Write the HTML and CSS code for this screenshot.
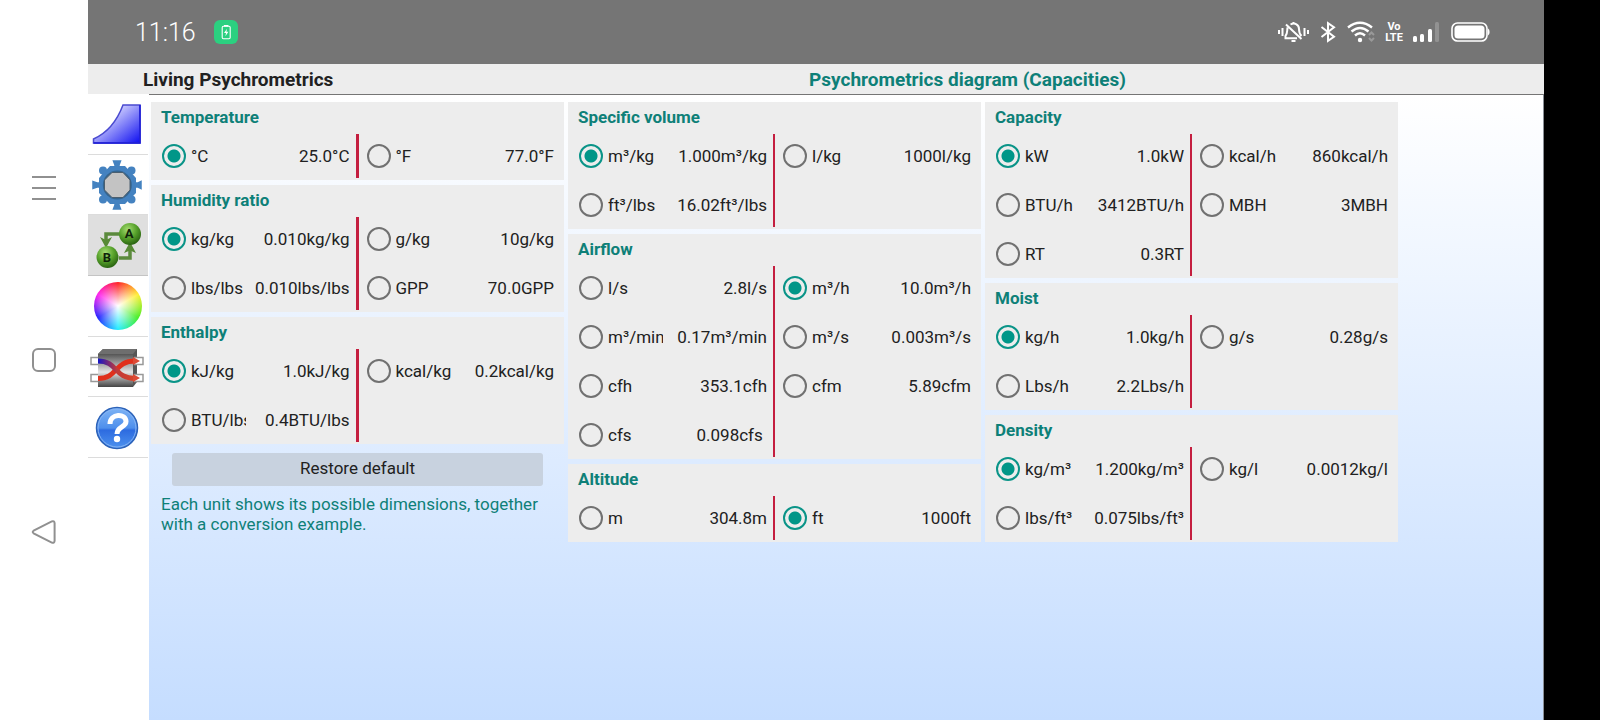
FILE: index.html
```html
<!DOCTYPE html>
<html lang="en">
<head>
<meta charset="UTF-8">
<meta name="viewport" content="width=device-width, initial-scale=1.0">
<title>Living Psychrometrics</title>
<link rel="stylesheet" href="styles.css">
</head>
<body>
<div class="screen">
    <nav class="system-nav">
        <button class="system-button" aria-label="Recent apps">
            <svg width="26" height="26" viewBox="0 0 26 26"><path d="M1 2h24M1 13h24M1 24h24"/></svg>
        </button>
        <button class="system-button" aria-label="Home">
            <svg width="26" height="26" viewBox="0 0 26 26"><rect x="2" y="2" width="22" height="22" rx="5"/></svg>
        </button>
        <button class="system-button" aria-label="Back">
            <svg width="26" height="26" viewBox="0 0 26 26"><path d="M2.6 11.7 20.8 2.4Q23.3 1.6 23.6 4V22Q23.3 24.4 20.8 23.6L2.6 14.3Q.8 13 2.6 11.7Z"/></svg>
        </button>
    </nav>

    <div class="app">
        <div class="status-bar">
            <span class="clock">11:16</span>
            <svg class="charge" width="24" height="24" viewBox="0 0 24 24">
                <rect width="24" height="24" rx="6" fill="#2bd080"/>
                <rect x="8.2" y="6.2" width="8" height="12.6" rx="1.2" fill="none" stroke="#fff" stroke-width="1.1"/>
                <path d="M10 5h4.400v1.500H10zM13 8.800l-3 4.200h2l-.6 3.200 3-4.400h-2z" fill="#fff"/>
            </svg>
            <div class="status-icons">
                <svg width="31" height="22" viewBox="0 0 31 22" fill="none" stroke="#fff" stroke-width="2">
                    <path d="M1 9v4M4.500 7v8M26.500 7v8M30 9v4"/>
                    <path d="M8 3.500 23.500 18M9.500 6.500C9 10 9.600 12.500 7.500 15V17.200H19M12.500 3.500C17 1 21 4 21 8c0 3 .5 5 2.500 7M15.500 1v2M13.500 20h4"/>
                </svg>
                <svg width="16" height="22" viewBox="0 0 16 22" fill="none" stroke="#fff" stroke-width="2">
                    <path d="M1.500 6 14 15.800 8 19.800V2.200L14 6.200 1.500 16"/>
                </svg>
                <svg width="28" height="22" viewBox="0 0 28 22" fill="none" stroke="#fff" stroke-width="2.400">
                    <path d="M1 6.500Q13 -3 25 6.500M4.500 10.500Q13 3.500 21.500 10.500M8 14.500Q13 10 18 14.500"/>
                    <circle cx="13" cy="19" r="2.200" fill="#fff" stroke="none"/>
                    <path d="M22 14l2.500-2.500L27 14M22 17l2.500 2.500L27 17" stroke="#999" stroke-width="2"/>
                </svg>
                <span class="volte">Vo<br>LTE</span>
                <svg width="27" height="22" viewBox="0 0 27 22">
                    <rect x="0" y="15" width="4" height="6" rx="1.500" fill="#fff"/>
                    <rect x="7" y="13" width="4" height="8" rx="1.500" fill="#fff"/>
                    <rect x="15" y="8" width="4" height="13" rx="1.500" fill="#fff"/>
                    <rect x="22" y="1" width="4" height="20" rx="1.500" fill="#929292"/>
                </svg>
                <svg width="40" height="22" viewBox="0 0 40 22">
                    <rect x="1" y="2" width="35" height="18" rx="5.500" fill="none" stroke="#fff" stroke-width="1.600"/>
                    <rect x="3.500" y="4.500" width="30" height="13" rx="3.500" fill="#fff"/>
                    <path d="M37 7.500q1.600.5 1.600 3.500t-1.600 3.500z" fill="#fff"/>
                </svg>
            </div>
        </div>

        <header class="title-bar">
            <h1 class="app-name">Living Psychrometrics</h1>
            <h2 class="page-name">Psychrometrics diagram (Capacities)</h2>
        </header>

        <div class="body">
            <nav class="sidebar">
                <button class="tool" aria-label="Diagram">
                    <svg width="56" height="56" viewBox="0 0 56 56">
                        <defs><linearGradient id="chart" x1="0" y1="0" x2="1" y2="1"><stop offset=".25" stop-color="#dcdcff"/><stop offset="1" stop-color="#0d0df0"/></linearGradient></defs>
                        <path d="M3.500 47V43C17 37 27 25 33 9H50V47Z" fill="url(#chart)" stroke="#4a4ad0" stroke-width="1.500"/>
                        <path d="M50 9V47H3.500" fill="none" stroke="#1818d8" stroke-width="1.500"/>
                    </svg>
                </button>
                <button class="tool" aria-label="Settings">
                    <svg width="56" height="56" viewBox="0 0 56 56">
                        <g fill="#4482c0">
                            <path d="M25 11V8L23.500 4h7L29 8V11zM25 45V48L23.500 52h7L29 48V45zM10 26H7L3 24.500v7L7 30H10zM45 26H48L51 24.500v7L48 30H45z" stroke="#4482c0" stroke-width="1.500"/>
                            <path d="M20 9h15l11 12v15L35 47H20L9 36V21z"/>
                            <circle cx="13" cy="13.500" r="4"/>
                            <circle cx="41.500" cy="13.500" r="4"/>
                            <circle cx="13" cy="42.500" r="4"/>
                            <circle cx="41.500" cy="42.500" r="4"/>
                            <circle cx="27.300" cy="28" r="18.500"/>
                        </g>
                        <circle cx="27.300" cy="28" r="14.500" fill="#34658f"/>
                        <path d="M22 15.500h11l7 7.500v10L33 40.500H22L14.500 33V23z" fill="#c3c3c3" stroke="#4b5f70"/>
                    </svg>
                </button>
                <button class="tool active" aria-label="Units" aria-current="page">
                    <svg width="56" height="56" viewBox="0 0 56 56">
                        <defs><radialGradient id="ball" cx=".4" cy=".3" r=".7"><stop offset="0" stop-color="#a6dc72"/><stop offset=".55" stop-color="#58a32c"/><stop offset="1" stop-color="#2b6512"/></radialGradient></defs>
                        <g fill="none" stroke="#5b8a3c" stroke-width="3.500">
                            <path d="M31 17H16V23M29 41H40V33"/>
                        </g>
                        <path d="M10 20l6 3 6-3-6 11zM34 36l6-2.500 6 2.500-6-11z" fill="#578a36"/>
                        <circle cx="40" cy="17" r="11" fill="url(#ball)"/>
                        <circle cx="17.500" cy="40" r="11" fill="url(#ball)"/>
                        <text x="39" y="21">A</text>
                        <text x="17" y="45">B</text>
                    </svg>
                </button>
                <button class="tool" aria-label="Colors"><span class="color-wheel"></span></button>
                <button class="tool" aria-label="Processes">
                    <svg width="56" height="56" viewBox="0 0 56 56">
                        <defs>
                            <linearGradient id="steel" x1="0" y1="0" x2="0" y2="1"><stop offset="0" stop-color="#555"/><stop offset=".55" stop-color="#e4e4e4"/><stop offset="1" stop-color="#444"/></linearGradient>
                            <linearGradient id="flow" x1="0" y1="0" x2="1" y2="0"><stop offset="0" stop-color="#1414c8"/><stop offset=".5" stop-color="#c03a3a"/><stop offset="1" stop-color="#d84428"/></linearGradient>
                        </defs>
                        <path d="M8 15 13 10H47V43L43 48z" fill="#555"/>
                        <rect x="8" y="15" width="35" height="33" fill="url(#steel)"/>
                        <path d="M8 15 13 10H47L43 15z" fill="#6e6e6e"/>
                        <path d="M8 18.500H1V25.500H8M8 35.500H1V42.500H8M44 18.500H53V25.500H44M44 35.500H53V42.500H44" fill="#fff" stroke="#999" stroke-width="1.500"/>
                        <path d="M8 39.500C28 39.500 24 22 45 22" fill="none" stroke="#e0301c" stroke-width="5"/>
                        <path d="M8 22C28 22 24 39.500 45 39.500" fill="none" stroke="url(#flow)" stroke-width="5"/>
                        <path d="M43 18l7 4-7 4zM43 35l7 4-7 4z" fill="#dc4a35"/>
                    </svg>
                </button>
                <button class="tool" aria-label="Help">
                    <svg width="56" height="56" viewBox="0 0 56 56">
                        <defs><linearGradient id="help" x1="0" y1="0" x2="0" y2="1"><stop offset="0" stop-color="#7fb4f5"/><stop offset=".5" stop-color="#4e8fec"/><stop offset=".55" stop-color="#2d6be0"/><stop offset="1" stop-color="#4d92ee"/></linearGradient></defs>
                        <circle cx="27" cy="29" r="20.500" fill="url(#help)" stroke="#2c62b8" stroke-width="1.500"/>
                        <circle cx="27" cy="29" r="19" fill="none" stroke="#86b4f4"/>
                        <path d="M20 25C20 14 36 14 36 22.500 36 28.500 27 27.500 27 35" fill="none" stroke="#fff" stroke-width="5"/>
                        <circle cx="27" cy="40" r="3.200" fill="#fff"/>
                    </svg>
                </button>
            </nav>

            <main class="content">
                <form class="columns">
                    <div class="column wide-line">
                        <fieldset class="unit">
                            <legend>Temperature</legend>
                            <div class="options">
                                <div class="half">
                                    <label><input type="radio" name="temperature" checked><span class="name">°C</span><span class="value">25.0°C</span></label>
                                </div>
                                <div class="half">
                                    <label><input type="radio" name="temperature"><span class="name">°F</span><span class="value">77.0°F</span></label>
                                </div>
                            </div>
                        </fieldset>
                        <fieldset class="unit">
                            <legend>Humidity ratio</legend>
                            <div class="options">
                                <div class="half">
                                    <label><input type="radio" name="humidity" checked><span class="name">kg/kg</span><span class="value">0.010kg/kg</span></label>
                                    <label><input type="radio" name="humidity"><span class="name">lbs/lbs</span><span class="value">0.010lbs/lbs</span></label>
                                </div>
                                <div class="half">
                                    <label><input type="radio" name="humidity"><span class="name">g/kg</span><span class="value">10g/kg</span></label>
                                    <label><input type="radio" name="humidity"><span class="name">GPP</span><span class="value">70.0GPP</span></label>
                                </div>
                            </div>
                        </fieldset>
                        <fieldset class="unit">
                            <legend>Enthalpy</legend>
                            <div class="options">
                                <div class="half">
                                    <label><input type="radio" name="enthalpy" checked><span class="name">kJ/kg</span><span class="value">1.0kJ/kg</span></label>
                                    <label><input type="radio" name="enthalpy"><span class="name">BTU/lbs</span><span class="value">0.4BTU/lbs</span></label>
                                </div>
                                <div class="half">
                                    <label><input type="radio" name="enthalpy"><span class="name">kcal/kg</span><span class="value">0.2kcal/kg</span></label>
                                </div>
                            </div>
                        </fieldset>
                        <button class="restore" type="reset">Restore default</button>
                        <p class="hint">Each unit shows its possible dimensions, together with a conversion example.</p>
                    </div>

                    <div class="column">
                        <fieldset class="unit">
                            <legend>Specific volume</legend>
                            <div class="options">
                                <div class="half">
                                    <label><input type="radio" name="volume" checked><span class="name">m³/kg</span><span class="value">1.000m³/kg</span></label>
                                    <label><input type="radio" name="volume"><span class="name">ft³/lbs</span><span class="value">16.02ft³/lbs</span></label>
                                </div>
                                <div class="half">
                                    <label><input type="radio" name="volume"><span class="name">l/kg</span><span class="value">1000l/kg</span></label>
                                </div>
                            </div>
                        </fieldset>
                        <fieldset class="unit">
                            <legend>Airflow</legend>
                            <div class="options">
                                <div class="half">
                                    <label><input type="radio" name="airflow"><span class="name">l/s</span><span class="value">2.8l/s</span></label>
                                    <label><input type="radio" name="airflow"><span class="name">m³/min</span><span class="value">0.17m³/min</span></label>
                                    <label><input type="radio" name="airflow"><span class="name">cfh</span><span class="value">353.1cfh</span></label>
                                    <label><input type="radio" name="airflow"><span class="name">cfs</span><span class="value">0.098cfs&nbsp;</span></label>
                                </div>
                                <div class="half">
                                    <label><input type="radio" name="airflow" checked><span class="name">m³/h</span><span class="value">10.0m³/h</span></label>
                                    <label><input type="radio" name="airflow"><span class="name">m³/s</span><span class="value">0.003m³/s</span></label>
                                    <label><input type="radio" name="airflow"><span class="name">cfm</span><span class="value">5.89cfm</span></label>
                                </div>
                            </div>
                        </fieldset>
                        <fieldset class="unit">
                            <legend>Altitude</legend>
                            <div class="options">
                                <div class="half">
                                    <label><input type="radio" name="altitude"><span class="name">m</span><span class="value">304.8m</span></label>
                                </div>
                                <div class="half">
                                    <label><input type="radio" name="altitude" checked><span class="name">ft</span><span class="value">1000ft</span></label>
                                </div>
                            </div>
                        </fieldset>
                    </div>

                    <div class="column">
                        <fieldset class="unit">
                            <legend>Capacity</legend>
                            <div class="options">
                                <div class="half">
                                    <label><input type="radio" name="capacity" checked><span class="name">kW</span><span class="value">1.0kW</span></label>
                                    <label><input type="radio" name="capacity"><span class="name">BTU/h</span><span class="value">3412BTU/h</span></label>
                                    <label><input type="radio" name="capacity"><span class="name">RT</span><span class="value">0.3RT</span></label>
                                </div>
                                <div class="half">
                                    <label><input type="radio" name="capacity"><span class="name">kcal/h</span><span class="value">860kcal/h</span></label>
                                    <label><input type="radio" name="capacity"><span class="name">MBH</span><span class="value">3MBH</span></label>
                                </div>
                            </div>
                        </fieldset>
                        <fieldset class="unit">
                            <legend>Moist</legend>
                            <div class="options">
                                <div class="half">
                                    <label><input type="radio" name="moist" checked><span class="name">kg/h</span><span class="value">1.0kg/h</span></label>
                                    <label><input type="radio" name="moist"><span class="name">Lbs/h</span><span class="value">2.2Lbs/h</span></label>
                                </div>
                                <div class="half">
                                    <label><input type="radio" name="moist"><span class="name">g/s</span><span class="value">0.28g/s</span></label>
                                </div>
                            </div>
                        </fieldset>
                        <fieldset class="unit">
                            <legend>Density</legend>
                            <div class="options">
                                <div class="half">
                                    <label><input type="radio" name="density" checked><span class="name">kg/m³</span><span class="value">1.200kg/m³</span></label>
                                    <label><input type="radio" name="density"><span class="name">lbs/ft³</span><span class="value">0.075lbs/ft³</span></label>
                                </div>
                                <div class="half">
                                    <label><input type="radio" name="density"><span class="name">kg/l</span><span class="value">0.0012kg/l</span></label>
                                </div>
                            </div>
                        </fieldset>
                    </div>
                </form>
            </main>
        </div>
    </div>
</div>
</body>
</html>
```
FILE: styles.css
```css
* {
    box-sizing: border-box;
}
body {
    margin: 0;
    font-family: Roboto, "Noto Sans", sans-serif;
    font-size: 17px;
    color: #212121;
    background-color: #fff;
}
button {
    padding: 0;
    border: none;
    background: none;
    font: inherit;
    color: inherit;
    cursor: pointer;
}
.screen {
    display: flex;
    min-height: 100vh;
    padding-right: 56px;
    background: linear-gradient(#000, #000) right / 56px 100% no-repeat;
}

/* Android buttons */
.system-nav {
    display: flex;
    flex: 0 0 88px;
    flex-direction: column;
    justify-content: center;
    align-items: center;
    gap: 146px;
}
.system-button {
    width: 26px;
    height: 26px;
}
.system-button svg {
    display: block;
    fill: none;
    stroke: #909090;
    stroke-width: 2;
}

.app {
    display: flex;
    flex: 1;
    flex-direction: column;
    min-width: 0;
}
.status-bar {
    display: flex;
    align-items: center;
    height: 64px;
    padding: 0 53px 0 47px;
    background-color: #757575;
    color: #fff;
}
.clock {
    width: 79px;
    font-size: 25px;
    font-weight: 300;
}
.status-icons {
    display: flex;
    align-items: center;
    gap: 11px;
    margin-left: auto;
}
.volte {
    display: flex;
    justify-content: center;
    width: 16px;
    font-size: 11px;
    font-weight: bold;
    line-height: 11px;
    text-align: center;
}

.title-bar {
    display: flex;
    align-items: center;
    height: 30px;
    padding-left: 55px;
    background-color: #ededed;
}
.app-name,
.page-name {
    margin: 0;
    font-size: 19px;
    font-weight: bold;
}
.app-name {
    width: 248px;
}
.page-name {
    flex: 1;
    text-align: center;
    color: #0e8078;
}

.body {
    display: flex;
    flex: 1;
}
.sidebar {
    display: flex;
    flex: 0 0 60px;
    flex-direction: column;
    height: 364px;
    margin-right: 1px;
}
.tool {
    display: flex;
    flex: 1;
    justify-content: center;
    align-items: center;
    border-bottom: 1px solid #dcdcdc;
}
.tool.active {
    background-color: #dfdfdf;
    border-color: #c4c4c4;
}
.tool text {
    font-size: 13px;
    font-weight: bold;
    text-anchor: middle;
    fill: #10240a;
}
.color-wheel {
    width: 48px;
    height: 48px;
    border-radius: 50%;
    background: radial-gradient(#fff, transparent 70%), conic-gradient(#f22, #fe3, #4e2, #2ef, #22f, #f2e, #f22);
}

.content {
    flex: 1;
    padding: 7px 145px 0 2px;
    border-top: 1px solid #757575;
    border-right: 1px solid #8a8f96;
    background: linear-gradient(#fff, #c5ddff);
}
.columns {
    display: grid;
    grid-template-columns: repeat(3, 1fr);
    gap: 4px;
}
.column {
    display: flex;
    flex-direction: column;
    gap: 5px;
}
.unit {
    min-width: 0;
    margin: 0;
    padding: 0 10px 2px;
    border: none;
    background-color: #ededed;
}
.unit legend {
    float: left;
    width: 100%;
    height: 32px;
    padding: 0;
    font-weight: bold;
    line-height: 30px;
    color: #0e8078;
}
.options {
    display: flex;
    clear: both;
}
.half {
    display: flex;
    flex: 1;
    flex-direction: column;
    gap: 5px;
    min-width: 0;
    padding-left: 7px;
}
.half:first-child {
    padding: 0 6px 0 0;
    border-right: 2px solid #c41e3f;
}
.wide-line .half:first-child {
    border-right-width: 3px;
}
.half label {
    display: flex;
    align-items: center;
    height: 44px;
    cursor: pointer;
}
.half input {
    flex: none;
    appearance: none;
    width: 24px;
    height: 24px;
    margin: 0 5px 0 1px;
    border: 2px solid #717171;
    border-radius: 50%;
}
.half input:checked {
    border-color: #0a9488;
    background: radial-gradient(circle, #009688 6px, transparent 7px);
}
.name {
    width: 55px;
    overflow: hidden;
    white-space: nowrap;
}
.value {
    margin-left: auto;
    white-space: nowrap;
}

.restore {
    height: 33px;
    margin: 4px 21px 0;
    padding-bottom: 3px;
    border-radius: 3px;
    background-color: #c8d2df;
}
.hint {
    margin: 3px 10px;
    line-height: 20px;
    color: #0e8078;
}
```
